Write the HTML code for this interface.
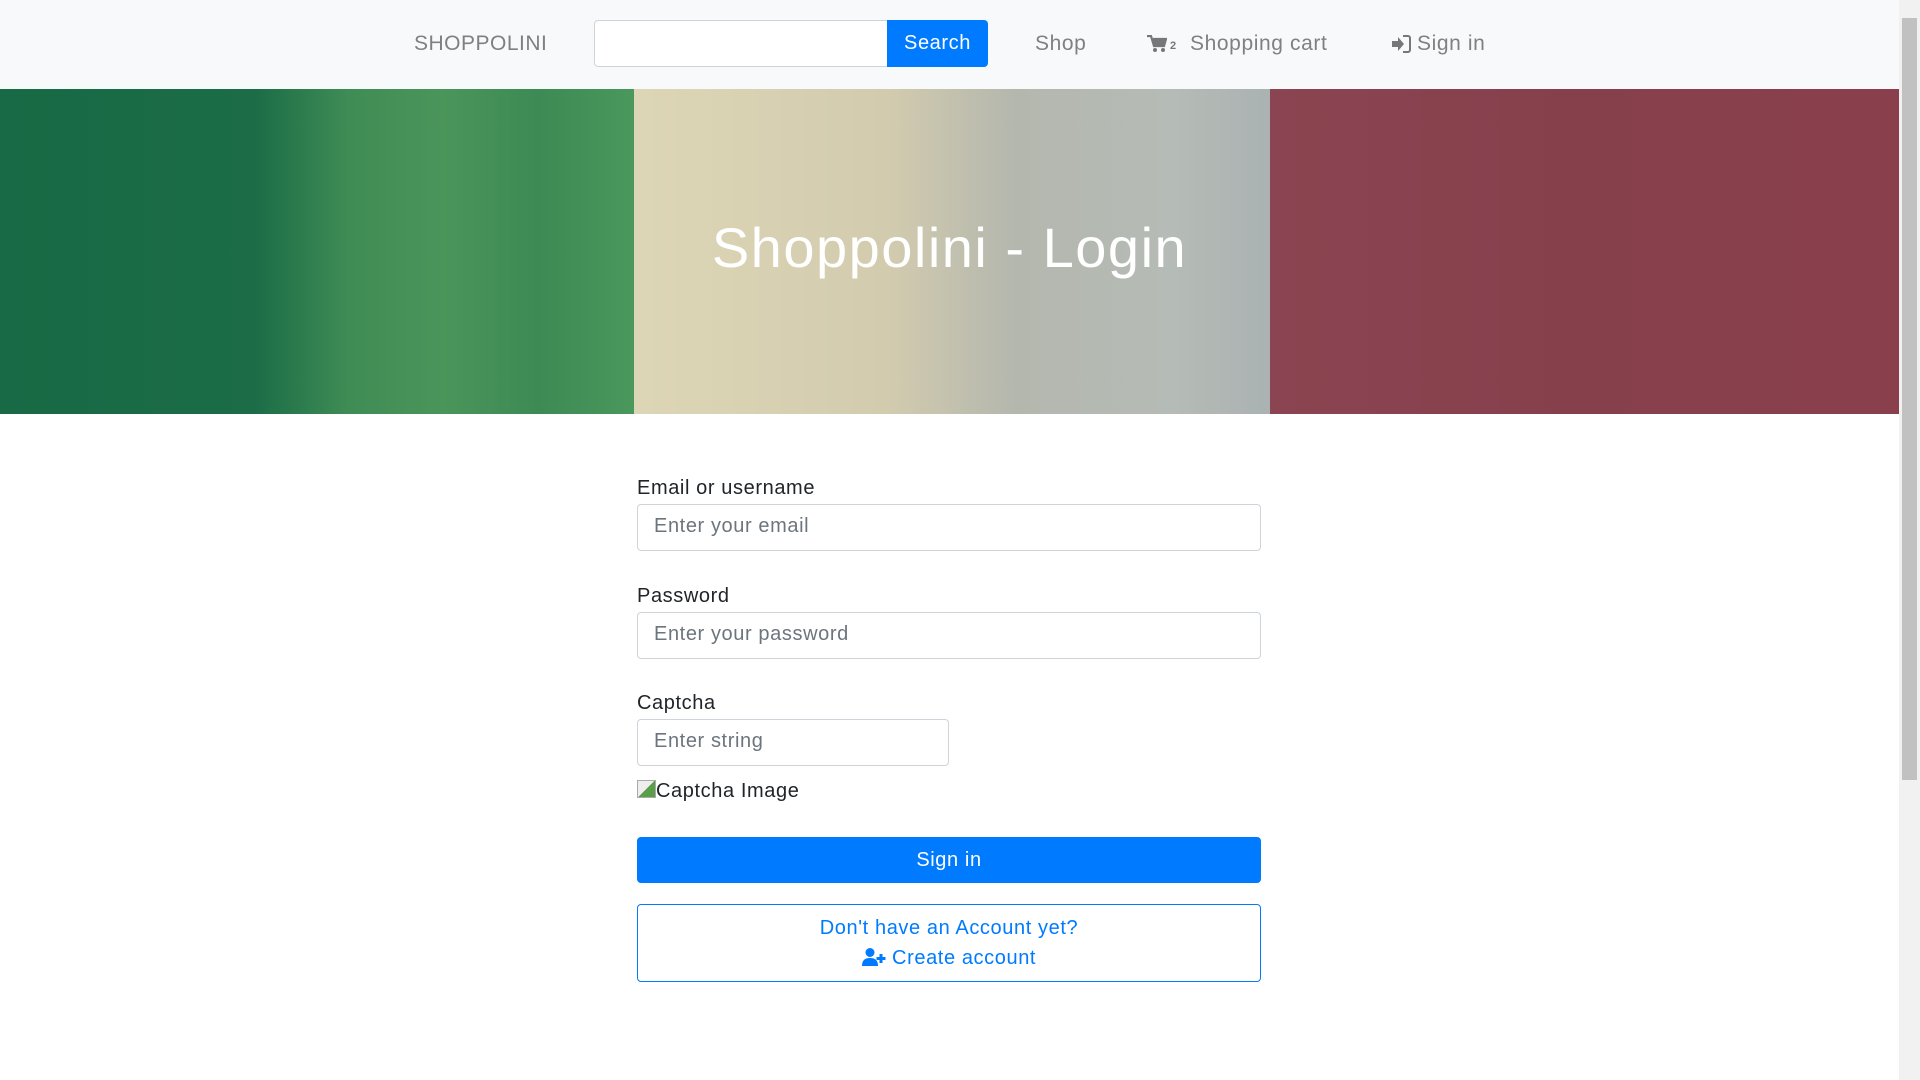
<!DOCTYPE html>
<html><head><meta charset="utf-8"><style>
*{box-sizing:border-box;margin:0;padding:0}
html,body{width:1920px;height:1080px;overflow:hidden;background:#fff;font-family:"Liberation Sans",sans-serif}
.nav{position:absolute;left:0;top:0;width:1899px;height:89px;background:#f8f9fa}
.nav span,.nav div{position:absolute}
.t{color:#808080;font-size:21px;top:32px;letter-spacing:0.6px}
.sb{position:absolute;right:0;top:0;width:21px;height:1080px;background:#f1f1f1}
.sb .th{position:absolute;left:3px;top:18px;width:15px;height:762px;background:#c1c1c1}
.hero{position:absolute;left:0;top:89px;width:1899px;height:325px;overflow:hidden}
.s{position:absolute;top:0;height:325px}
h1{position:absolute;left:0;width:1899px;top:126px;text-align:center;color:#fff;font-weight:normal;font-size:56px;letter-spacing:1.5px}
.lbl{position:absolute;left:637px;font-size:20px;color:#212529;letter-spacing:0.6px}
.inp{position:absolute;left:637px;height:47px;border:1px solid #ced4da;border-radius:4px;font-size:20px;color:#6c757d;padding:10px 16px;letter-spacing:0.6px}
</style></head><body>
<div class="nav">
<span class="t" style="left:414px;letter-spacing:0.5px">SHOPPOLINI</span>
<div style="left:594px;top:20px;width:294px;height:47px;background:#fff;border:1px solid #ced4da;border-radius:4px 0 0 4px"></div>
<div style="left:887px;top:20px;width:101px;height:47px;background:#007bff;border-radius:0 4px 4px 0;color:#fff;font-size:20px;text-align:center;line-height:46px;letter-spacing:0.6px">Search</div>
<span class="t" style="left:1035px">Shop</span>
<svg style="position:absolute;left:1147px;top:35px" width="20" height="18" viewBox="0 0 20 18"><path d="M0 1h4l3 10h10l2-7H6" fill="none" stroke="#777" stroke-width="2.2"/><path d="M6 4h13l-2 7H7z" fill="#777"/><circle cx="8" cy="15" r="2" fill="#777"/><circle cx="16" cy="15" r="2" fill="#777"/></svg>
<span style="left:1170px;top:40px;font-size:11px;color:#777;font-weight:bold">2</span>
<span class="t" style="left:1190px">Shopping cart</span>
<svg style="position:absolute;left:1392px;top:35px" width="19" height="18" viewBox="0 0 19 18"><path d="M0 6h6V2l6 7-6 7v-4H0z" fill="#777"/><path d="M11 1h5a2 2 0 0 1 2 2v12a2 2 0 0 1-2 2h-5" fill="none" stroke="#777" stroke-width="2"/></svg>
<span class="t" style="left:1417px">Sign in</span>
</div>
<div class="hero">
<div class="s" style="left:0;width:634px;background:linear-gradient(90deg,#176a45 0,#1b6c47 40%,#3f8c55 55%,#4a955a 70%,#3d8a55 85%,#4a985c 100%)"></div>
<div class="s" style="left:634px;width:636px;background:linear-gradient(90deg,#ddd6b6 0,#d2cbae 40%,#b4b7ae 60%,#b5bbb6 85%,#aab2b2 100%)"></div>
<div class="s" style="left:1270px;width:629px;background:linear-gradient(90deg,#8b4451,#86404c 50%,#8a3f4c)"></div>
<h1>Shoppolini - Login</h1>
</div>
<div class="sb"><div class="th"></div></div>
<div class="lbl" style="top:477px">Email or username</div>
<div class="inp" style="top:504px;width:624px">Enter your email</div>
<div class="lbl" style="top:585px">Password</div>
<div class="inp" style="top:612px;width:624px">Enter your password</div>
<div class="lbl" style="top:692px">Captcha</div>
<div class="inp" style="top:719px;width:312px">Enter string</div>
<div class="lbl" style="top:780px;left:637px"><span style="display:inline-block;width:19px;height:18px;border:1px solid #aaa;background:linear-gradient(135deg,#eee 50%,#5a9e4a 50%);vertical-align:-1px"></span>Captcha Image</div>
<div style="position:absolute;left:637px;top:837px;width:624px;height:46px;background:#007bff;border-radius:4px;color:#fff;font-size:20px;text-align:center;line-height:46px;letter-spacing:0.6px">Sign in</div>
<div style="position:absolute;left:637px;top:904px;width:624px;height:78px;border:1px solid #007bff;border-radius:4px;color:#007bff;font-size:20px;text-align:center;line-height:30px;padding-top:8px;letter-spacing:0.6px">Don't have an Account yet?<br><svg width="24" height="18" viewBox="0 0 24 18" style="vertical-align:-2px"><circle cx="8" cy="4.5" r="4.5" fill="#007bff"/><path d="M0 18c0-6 3-8 8-8s8 2 8 8z" fill="#007bff"/><path d="M19 6v9M14.5 10.5h9" stroke="#007bff" stroke-width="3"/></svg> Create account</div>
</body></html>
